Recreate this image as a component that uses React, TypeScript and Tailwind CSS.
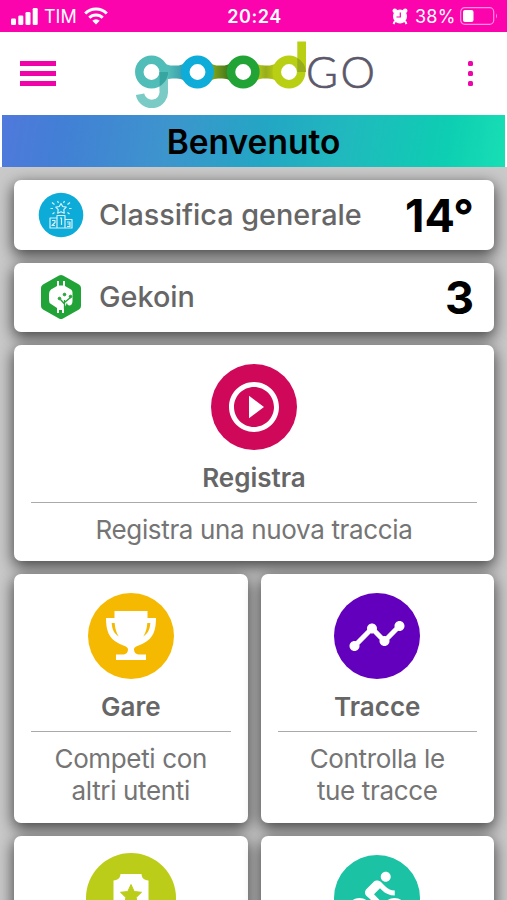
import React from 'react'
import { MdDirectionsBike, MdPlayCircleOutline, MdTimeline } from 'react-icons/md'

const StatusBar: React.FunctionComponent = () => (
  <div className="flex h-8 shrink-0 items-center justify-between bg-[#fb04ad] pl-[11px] pr-[9px] text-white">
    <div className="flex w-[150px] items-center">
      <svg width="27" height="17" viewBox="0 0 27 17" fill="currentColor">
        <rect x="0" y="10.500" width="5" height="6.500" rx="1.300" />
        <rect x="7.300" y="7.500" width="5" height="9.500" rx="1.300" />
        <rect x="14.500" y="4" width="5" height="13" rx="1.300" />
        <rect x="21.700" y="0" width="5" height="17" rx="1.300" />
      </svg>
      <span className="ml-[6px] w-[34px] pt-[2px] text-[18px] leading-none">TIM</span>
      <svg className="ml-[6px]" width="24" height="18" viewBox="0 0 24 18" fill="none" stroke="currentColor" strokeWidth="3">
        <path d="M1.200 6.500a15.500 15.500 0 0 1 21.600 0" />
        <path d="M5.300 10.700a9.600 9.600 0 0 1 13.400 0" />
        <path d="M8.300 13.800a5.300 5.300 0 0 1 7.400 0L12 17.500z" fill="currentColor" stroke="none" />
      </svg>
    </div>
    <span className="pt-[2px] text-[18px] font-semibold leading-none tracking-[0.600px]">20:24</span>
    <div className="flex w-[150px] items-center justify-end">
      <svg width="16" height="17" viewBox="0 0 16 17" fill="currentColor">
        <circle cx="8" cy="8.500" r="7" />
        <circle cx="2.800" cy="2.800" r="2.300" />
        <circle cx="13.200" cy="2.800" r="2.300" />
        <path d="M3 13l-1.500 3M13 13l1.500 3" stroke="currentColor" strokeWidth="2" />
        <path d="M8.300 4.500v4.500H4.500" fill="none" stroke="#fb04ad" strokeWidth="1.200" />
      </svg>
      <span className="ml-[7px] w-[41px] pt-[2px] text-[18px] leading-none tracking-[0.200px]">38%</span>
      <svg className="ml-[4px]" width="38" height="18" viewBox="0 0 38 18">
        <rect x="0.700" y="0.700" width="33" height="16.600" rx="4" fill="none" stroke="#ff8edb" strokeWidth="1.200" />
        <rect x="3" y="3" width="10.500" height="12" rx="2" fill="#fff" />
        <path d="M36 6.500q2 2.500 0 5z" fill="#ff8edb" />
      </svg>
    </div>
  </div>
)

const Logo: React.FunctionComponent = () => (
  <svg className="ml-[77px] mr-auto" width="242" height="68" viewBox="133 39.500 242 68">
    <defs>
      <linearGradient id="link-a" x1="0" x2="1">
        <stop offset="0.300" stopColor="#52bdb9" />
        <stop offset="0.750" stopColor="#3a9fac" />
      </linearGradient>
      <linearGradient id="link-b" x1="0" x2="1">
        <stop offset="0.250" stopColor="#7fa51a" />
        <stop offset="0.750" stopColor="#46771a" />
      </linearGradient>
      <linearGradient id="link-c" x1="0" x2="1">
        <stop offset="0.200" stopColor="#b3cb16" />
        <stop offset="0.500" stopColor="#97ad1c" />
        <stop offset="0.800" stopColor="#b9cc12" />
      </linearGradient>
    </defs>
    <path d="M159 57C166 65 168 65 174.500 65S183 65 190 57V86C183 78 181 78 174.500 78S166 78 159 86z" fill="url(#link-a)" />
    <path d="M205 57C212 65 214 65 220.500 65S229 65 236 57V86C229 78 227 78 220.500 78S212 78 205 86z" fill="url(#link-b)" />
    <path d="M250 57C257 65 260 65 266 65S275 65 282 57V86C275 78 272 78 266 78S257 78 250 86z" fill="url(#link-c)" />
    <g fill="#fff" strokeWidth="8.500">
      <circle cx="151.500" cy="71.500" r="12.200" stroke="#51bdb8" />
      <circle cx="197.500" cy="71.500" r="12.200" stroke="#0eacd8" />
      <circle cx="243.200" cy="71.500" r="12.200" stroke="#22a336" />
      <circle cx="289" cy="71.500" r="12.200" stroke="#b9cf13" />
    </g>
    <path d="M163.700 71.500V90A12 12 0 0 1 140 93.700" fill="none" stroke="#6cc5c0" strokeWidth="8.500" strokeOpacity="0.900" />
    <path d="M159.500 71.500H168V74Q167 80 162 84L159.500 86z" fill="#38a6a0" />
    <rect x="297.300" y="41" width="8.700" height="30.500" fill="#b9cf13" />
    <path d="M297.300 57.500Q305 61.500 306 71.500H297.300z" fill="#98ad1b" />
    <text
      x="306"
      y="87.300"
      textLength="69"
      lengthAdjust="spacing"
      fontFamily="Lato, sans-serif"
      fontWeight="300"
      fontSize="43.500"
      fill="#5b586a"
      stroke="#5b586a"
      strokeWidth="0.700"
    >
      GO
    </text>
  </svg>
)

const RankIcon: React.FunctionComponent = () => (
  <svg width="46" height="46" viewBox="0 0 46 46">
    <circle cx="23" cy="23" r="22.300" fill="#0dabd8" />
    <g fill="none" stroke="#d5f1fa" strokeWidth="1.200" strokeLinejoin="round">
      <path d="M23 11.500l1.700 3 3.500.6-2.400 2.600.5 3.500-3.300-1.400-3.300 1.400.5-3.500-2.400-2.600 3.500-.6z" />
      <path d="M19.500 9l1 2M26.500 9l-1 2M14 10.500l2.500 2M32 10.500l-2.500 2M12.500 16.500h2.500M33.500 16.500H31M14.500 22l2-1.500M31.500 22l-2-1.500" />
      <path d="M12 36V26h7v10zM19 36V23.500h8V36zM27 36v-8.500h7V36zM12 36h22" />
      <path d="M14 28.500h3v2l-3 3h3M22 26h1.500v7M29 30h3v4.500h-3M29.500 32H32" />
    </g>
  </svg>
)

const GekoinIcon: React.FunctionComponent = () => (
  <svg width="46" height="46" viewBox="0 0 46 46">
    <path d="M21 1.500q2-1 4 0L41 10.500q2 1 2 3.500v18q0 2.500-2 3.500L25 44.500q-2 1-4 0L5 35.500q-2-1-2-3.500V14q0-2.500 2-3.500z" fill="#22a337" />
    <path d="M19 12V7h2v4.500h4V7h2v5l6 3.500q1.500 1 1.500 3V27c0 3-1.500 4.500-3 4.500s-2.500-1-2.500-3c-1 2.500-2 4.500-3 5.500v5h-2v-3h-3v3h-2v-5l-6-4q-2-1-2-4v-6q0-3 2-4.500z" fill="#fff" />
    <g fill="#22a337" stroke="#22a337">
      <path d="M26.500 35V26M26.500 30l-4-4.500M26.500 28.500l6-5" fill="none" strokeWidth="1.300" />
      <circle cx="21.500" cy="24.500" r="1.300" />
      <circle cx="26.500" cy="20.500" r="1.300" />
      <circle cx="32.500" cy="22.500" r="1.300" />
    </g>
  </svg>
)

const TrophyIcon: React.FunctionComponent = () => (
  <svg width="50" height="50" viewBox="0 0 50 50" fill="#fff">
    <path
      fillRule="evenodd"
      d="M8.500 0h33v7H50c0 12-2.500 20-12 25-5 3-10 3-10 6.500 0 3 2 5 6 5h6V49H10v-5.500h6c4 0 6-2 6-5 0-3.500-5-3.500-10-6.500C2.500 27 0 19 0 7h8.500zM5.700 12c.5 7 2.500 10.500 7 13.500C10 21 9 17 8.700 12zM44.300 12c-.5 7-2.500 10.500-7 13.500C40 21 41 17 41.300 12z"
    />
  </svg>
)

const BadgeIcon: React.FunctionComponent = () => (
  <svg width="36" height="48" viewBox="0 0 36 48">
    <path d="M7.500 0h21c.5 4 2 6 7 6.500V38L18 47 .5 38V6.500C5.500 6 7 4 7.500 0z" fill="#fff" />
    <path d="M18 10.500l3.200 7 7.300.8-5.400 5.200 1.500 7.500-6.600-3.800-6.600 3.800 1.500-7.500-5.400-5.200 7.300-.8z" fill="#bccd19" stroke="#bccd19" />
  </svg>
)

const Row: React.FunctionComponent<{ icon: React.ReactNode; label: string; value: string }> = ({ icon, label, value }) => (
  <div className="flex h-[69.500px] items-center rounded-[7px] bg-white pl-6 pr-[20px] shadow-[0_5px_15px_1px_rgba(0,0,0,0.65)]">
    {icon}
    <span className="ml-[15px] flex-1 pb-px text-[28.800px] font-medium text-[#666]">{label}</span>
    <span className="pt-px text-[45px] font-bold leading-none text-black">{value}</span>
  </div>
)

type TileProps = { icon: React.ReactNode; color: string; title?: string; children?: React.ReactNode; className: string }

const Tile: React.FunctionComponent<TileProps> = ({ icon, color, title, children, className }) => (
  <div className={`flex flex-col items-center rounded-[7px] bg-white px-[17px] shadow-[0_5px_15px_1px_rgba(0,0,0,0.65)] ${className}`}>
    <div className={`flex shrink-0 items-center justify-center rounded-full text-white ${color}`}>{icon}</div>
    {title && <h2 className="mt-[10px] text-[26px] font-semibold leading-9 text-[#666]">{title}</h2>}
    {title && <hr className="mt-[6px] w-full border-[#aaa]" />}
    {children && <p className="mt-[11px] text-center text-[26px] leading-8 tracking-[-0.350px] text-[#757575]">{children}</p>}
  </div>
)

const App: React.FunctionComponent = () => (
  <div className="flex h-[900px] w-[507px] flex-col overflow-hidden bg-[#c9c9c9] font-[Inter,sans-serif]">
    <StatusBar />
    <header className="flex h-[83px] shrink-0 items-center bg-white pl-5 pr-[34px]">
      <button className="flex w-9 flex-col gap-[5.500px]">
        <span className="h-[4.500px] w-full bg-[#f003a8]" />
        <span className="h-[4.500px] w-full bg-[#f003a8]" />
        <span className="h-[4.500px] w-full bg-[#f003a8]" />
      </button>
      <Logo />
      <button className="flex flex-col gap-[5px]">
        <span className="size-[5px] rounded-[1.500px] bg-[#f003a8]" />
        <span className="size-[5px] rounded-[1.500px] bg-[#f003a8]" />
        <span className="size-[5px] rounded-[1.500px] bg-[#f003a8]" />
      </button>
    </header>
    <div className="z-10 bg-white">
      <h1 className="mx-[2px] flex h-[52px] items-center justify-center bg-[linear-gradient(100deg,#5079dc_0%,#427fd5_12%,#3d95cd_33%,#23a6c4_52%,#20b9be_68%,#0dceb2_88%,#18dfb5_100%)] pt-[3px] text-[33.500px] font-semibold text-black">
        Benvenuto
      </h1>
    </div>
    <main className="flex flex-col gap-[13px] pl-[14px] pr-[13px] pt-[13px]">
      <Row icon={<RankIcon />} label="Classifica generale" value="14°" />
      <Row icon={<GekoinIcon />} label="Gekoin" value="3" />
      <Tile icon={<MdPlayCircleOutline size={60} />} color="size-[86px] bg-[#d0085a]" title="Registra" className="h-[216px] pt-[19px]">
        Registra una nuova traccia
      </Tile>
      <div className="grid grid-cols-2 gap-[13px]">
        <Tile icon={<TrophyIcon />} color="size-[86px] bg-[#f6b902]" title="Gare" className="h-[249px] pt-[19px]">
          Competi con
          <br />
          altri utenti
        </Tile>
        <Tile icon={<MdTimeline size={60} />} color="size-[86px] bg-[#6200bd]" title="Tracce" className="h-[249px] pt-[19px]">
          Controlla le
          <br />
          tue tracce
        </Tile>
        <Tile icon={<BadgeIcon />} color="size-[90px] bg-[#bccd19]" className="h-[249px] pt-[17px]" />
        <Tile icon={<MdDirectionsBike size={60} />} color="size-[86px] bg-[#1bc2a3]" className="h-[249px] pt-[19px]" />
      </div>
    </main>
  </div>
)

export default App
